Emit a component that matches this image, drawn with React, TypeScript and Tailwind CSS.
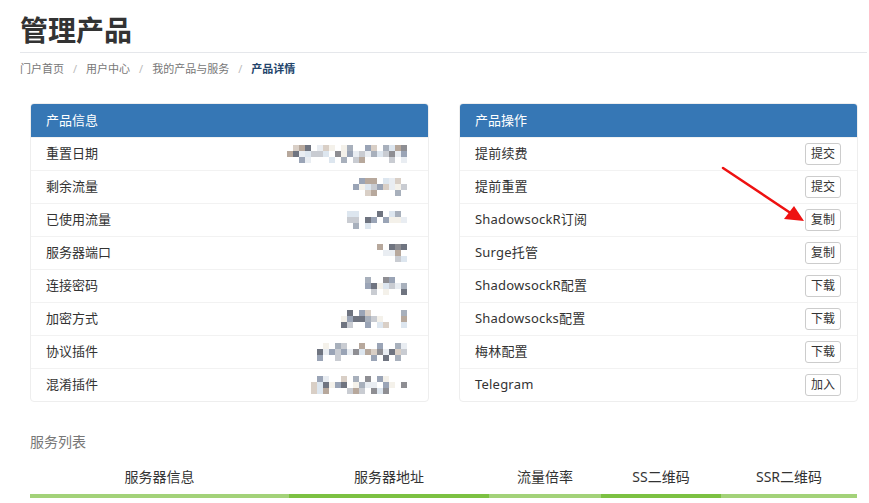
import React from "react";

const FONT = { fontFamily: '"Noto Sans", "Noto Sans CJK SC", sans-serif' };

const infoRows: { label: string; cells: number }[] = [
  { label: "重置日期", cells: 20 },
  { label: "剩余流量", cells: 9 },
  { label: "已使用流量", cells: 10 },
  { label: "服务器端口", cells: 5 },
  { label: "连接密码", cells: 7 },
  { label: "加密方式", cells: 11 },
  { label: "协议插件", cells: 15 },
  { label: "混淆插件", cells: 18 },
];

const actionRows: { label: string; button: string }[] = [
  { label: "提前续费", button: "提交" },
  { label: "提前重置", button: "提交" },
  { label: "ShadowsockR订阅", button: "复制" },
  { label: "Surge托管", button: "复制" },
  { label: "ShadowsockR配置", button: "下载" },
  { label: "Shadowsocks配置", button: "下载" },
  { label: "梅林配置", button: "下载" },
  { label: "Telegram", button: "加入" },
];

const palette = [
  "#8e8e93",
  "#a8b0bc",
  "#c9ccd2",
  "#b7a89c",
  "#d9cfc6",
  "#6f7480",
  "#dde6ef",
  "#9aa4b6",
  "#f4f1ea",
  "#ffffff",
  "#ffffff",
  "#e9edf2",
];

// mosaic placeholder for the blurred values
function Mosaic({ cells, seed }: { cells: number; seed: number }) {
  let s = seed * 9301 + 49297;
  const rand = () => {
    s = (s * 9301 + 49297) % 233280;
    return s / 233280;
  };
  const rows = [0, 1, 2].map((r) =>
    Array.from({ length: cells }).map(() => {
      const p = rand();
      if (r !== 1 && p < 0.45) return "transparent";
      return palette[Math.floor(rand() * palette.length)];
    })
  );
  return (
    <div className="flex flex-col">
      {rows.map((row, i) => (
        <div key={i} className="flex">
          {row.map((color, j) => (
            <div key={j} className="w-[6px] h-[6px]" style={{ background: color }} />
          ))}
        </div>
      ))}
    </div>
  );
}

function Panel({ title, children }: { title: string; children: React.ReactNode }) {
  return (
    <div className="flex-1 border border-[#eeeeee] rounded-[4px] overflow-hidden bg-white">
      <div className="h-[33px] bg-[#3677b5] text-white text-[13px] flex items-center px-[15px]">
        {title}
      </div>
      {children}
    </div>
  );
}

export default function App() {
  return (
    <div className="relative w-[869px] h-[503px] bg-white overflow-hidden text-[#333]" style={FONT}>
      <div className="pl-[20px] pr-[2px]">
        <h1 className="text-[28px] font-bold leading-none pt-[16px] pb-[8px] text-[#333] border-b border-[#e5e7eb]">
          管理产品
        </h1>
        <div className="flex items-center text-[11px] text-[#777] h-[32px]">
          <span>门户首页</span>
          <span className="px-[9px] text-[#bbb]">/</span>
          <span>用户中心</span>
          <span className="px-[9px] text-[#bbb]">/</span>
          <span>我的产品与服务</span>
          <span className="px-[9px] text-[#bbb]">/</span>
          <span className="text-[#23446b] font-bold">产品详情</span>
        </div>
      </div>

      <div className="flex gap-[30px] pl-[30px] pr-[11px] mt-[18px]">
        <Panel title="产品信息">
          {infoRows.map((row, i) => (
            <div
              key={row.label}
              className="h-[33px] border-t border-[#f2f2f2] flex items-center justify-between pl-[15px] pr-[21px] text-[13px]"
            >
              <span>{row.label}</span>
              <Mosaic cells={row.cells} seed={i + 3} />
            </div>
          ))}
        </Panel>
        <Panel title="产品操作">
          {actionRows.map((row) => (
            <div
              key={row.label}
              className="h-[33px] border-t border-[#f2f2f2] flex items-center justify-between pl-[15px] pr-[16px] text-[13px]"
            >
              <span className="tracking-[0.2px]">{row.label}</span>
              <button className="h-[22px] px-[5px] border border-[#cccccc] rounded-[3px] text-[12px] leading-none bg-white text-[#333]">
                {row.button}
              </button>
            </div>
          ))}
        </Panel>
      </div>

      <div className="pl-[30px] pr-[12px]">
        <div className="text-[14px] text-[#777] mt-[30px] leading-[20px]">服务列表</div>
        <div className="flex mt-[7px] text-[14px] text-[#333]">
          <div className="w-[259px] flex flex-col">
            <div className="h-[35px] flex items-center justify-center">服务器信息</div>
            <div className="h-[4px] bg-[#a3d279]" />
          </div>
          <div className="w-[200px] flex flex-col">
            <div className="h-[35px] flex items-center justify-center">服务器地址</div>
            <div className="h-[4px] bg-[#7cc142]" />
          </div>
          <div className="w-[112px] flex flex-col">
            <div className="h-[35px] flex items-center justify-center">流量倍率</div>
            <div className="h-[4px] bg-[#a3d279]" />
          </div>
          <div className="w-[120px] flex flex-col">
            <div className="h-[35px] flex items-center justify-center">SS二维码</div>
            <div className="h-[4px] bg-[#7cc142]" />
          </div>
          <div className="flex-1 flex flex-col">
            <div className="h-[35px] flex items-center justify-center">SSR二维码</div>
            <div className="h-[4px] bg-[#a3d279]" />
          </div>
        </div>
      </div>

      {/* red annotation arrow */}
      <svg className="absolute left-0 top-0 pointer-events-none" width="869" height="503">
        <line x1="723" y1="168" x2="792" y2="214" stroke="#ee1111" strokeWidth="2.5" strokeLinecap="round" />
        <polygon points="804,221 784,219 794,206" fill="#ee1111" />
      </svg>
    </div>
  );
}
